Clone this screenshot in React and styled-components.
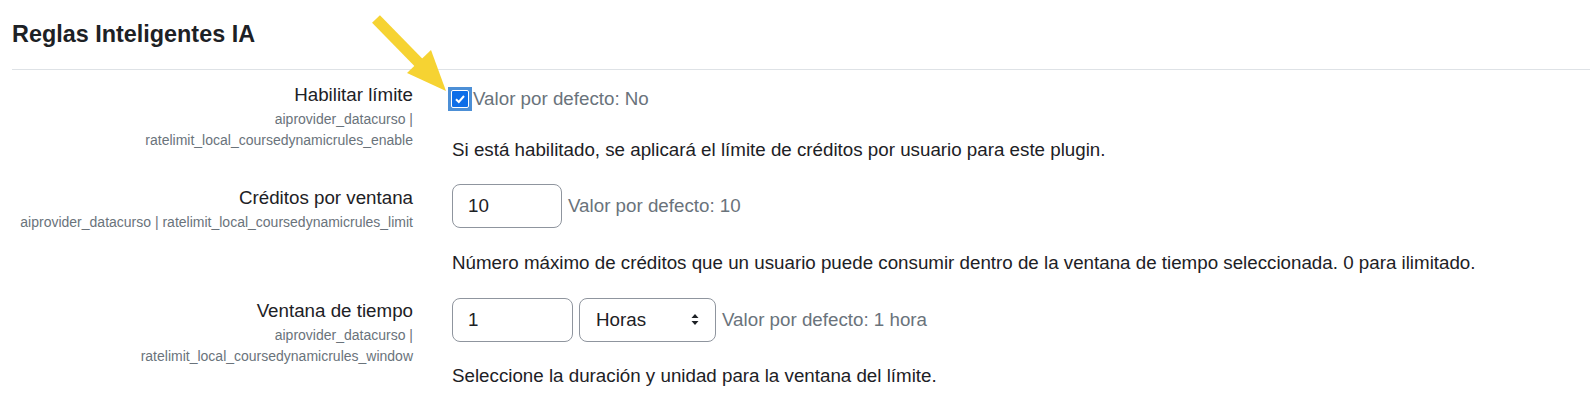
import React from "react"
import styled, { createGlobalStyle } from "styled-components"

const GlobalStyle = createGlobalStyle`
  body {
    margin: 0;
    background: #fff;
    color: #1d2125;
    font-family: "Liberation Sans", Arial, sans-serif;
  }
`

const Page = styled.div`
  position: relative;
  padding: 20px 0 0 12px;
  overflow: hidden;
`

const Heading = styled.h3`
  margin: 0;
  font-size: 23.4px;
  line-height: 28px;
  font-weight: 700;
`

const Divider = styled.hr`
  margin: 21px 0 11px;
  border: 0;
  border-top: 1px solid #dee2e6;
`

const SettingRow = styled.div`
  display: grid;
  grid-template-columns: 401px 1fr;
  column-gap: 39px;
  margin-bottom: 20px;
`

const LabelCol = styled.div`
  text-align: right;
`

const Label = styled.div`
  font-size: 18.75px;
  line-height: 28px;
`

const ShortName = styled.div`
  font-size: 14px;
  line-height: 21px;
  color: #6a737b;
`

const ContentCol = styled.div`
  display: flex;
  flex-direction: column;
`

const ControlRow = styled.div`
  display: flex;
  align-items: center;
  gap: 6px;
  height: ${(p) => p.$height}px;
`

const DefaultText = styled.span`
  font-size: 18.75px;
  line-height: 28px;
  color: #6a737b;
`

const Description = styled.div`
  margin-top: ${(p) => p.$gap}px;
  font-size: 18.75px;
  line-height: 28px;
`

const TextInput = styled.input`
  box-sizing: border-box;
  width: ${(p) => p.$width}px;
  height: 44px;
  padding: 0 15px;
  border: 1px solid #8f959e;
  border-radius: 8px;
  font-family: inherit;
  font-size: 18.75px;
  color: #1d2125;
  background: #fff;
  outline: none;
`

const SelectBox = styled.div`
  box-sizing: border-box;
  width: 137px;
  height: 44px;
  padding: 0 16px 0 16px;
  border: 1px solid #8f959e;
  border-radius: 8px;
  display: flex;
  align-items: center;
  justify-content: space-between;
  font-size: 18.75px;
  color: #1d2125;
`

const CheckRing = styled.span`
  box-sizing: border-box;
  width: 24px;
  height: 24px;
  margin-left: -4px;
  margin-right: -5px;
  margin-top: -1px;
  padding: 3px;
  background: #4c8fd6;
  display: flex;
`

const CheckBox = styled.span`
  box-sizing: border-box;
  width: 18px;
  height: 18px;
  border: 1px solid #fff;
  border-radius: 2px;
  background: #0d6ee8;
  display: flex;
  align-items: center;
  justify-content: center;
`

const Annotation = styled.svg`
  position: absolute;
  left: 0;
  top: 0;
  pointer-events: none;
`

const Checkbox = () => (
  <CheckRing>
    <CheckBox>
      <svg width="12" height="12" viewBox="0 0 12 12">
        <path d="M2 6.3 L4.8 9 L10 3" fill="none" stroke="#fff" strokeWidth="2" />
      </svg>
    </CheckBox>
  </CheckRing>
)

const SortArrows = () => (
  <svg width="8" height="13" viewBox="0 0 8 13">
    <path d="M4 1 L7.5 5 L0.5 5 Z" fill="#1d2125" />
    <path d="M4 12 L7.5 8 L0.5 8 Z" fill="#1d2125" />
  </svg>
)

const App = () => {
  return (
    <Page>
      <GlobalStyle />
      <Heading>Reglas Inteligentes IA</Heading>
      <Divider />

      <SettingRow>
        <LabelCol>
          <Label>Habilitar límite</Label>
          <ShortName>aiprovider_datacurso | ratelimit_local_coursedynamicrules_enable</ShortName>
        </LabelCol>
        <ContentCol>
          <ControlRow $height={36}>
            <Checkbox />
            <DefaultText>Valor por defecto: No</DefaultText>
          </ControlRow>
          <Description $gap={19}>
            Si está habilitado, se aplicará el límite de créditos por usuario para este plugin.
          </Description>
        </ContentCol>
      </SettingRow>

      <SettingRow>
        <LabelCol>
          <Label>Créditos por ventana</Label>
          <ShortName>aiprovider_datacurso | ratelimit_local_coursedynamicrules_limit</ShortName>
        </LabelCol>
        <ContentCol>
          <ControlRow $height={44}>
            <TextInput $width={110} defaultValue="10" />
            <DefaultText>Valor por defecto: 10</DefaultText>
          </ControlRow>
          <Description $gap={21}>
            Número máximo de créditos que un usuario puede consumir dentro de la ventana de tiempo
            seleccionada. 0 para ilimitado.
          </Description>
        </ContentCol>
      </SettingRow>

      <SettingRow>
        <LabelCol>
          <Label>Ventana de tiempo</Label>
          <ShortName>aiprovider_datacurso | ratelimit_local_coursedynamicrules_window</ShortName>
        </LabelCol>
        <ContentCol>
          <ControlRow $height={45}>
            <TextInput $width={121} defaultValue="1" />
            <SelectBox>
              <span>Horas</span>
              <SortArrows />
            </SelectBox>
            <DefaultText>Valor por defecto: 1 hora</DefaultText>
          </ControlRow>
          <Description $gap={20}>Seleccione la duración y unidad para la ventana del límite.</Description>
        </ContentCol>
      </SettingRow>

      <Annotation width="460" height="100" viewBox="0 0 460 100">
        <line x1="376" y1="19" x2="421" y2="65" stroke="#f6d332" strokeWidth="11" />
        <polygon points="446,91 407,73 431,50" fill="#f6d332" />
      </Annotation>
    </Page>
  )
}

export default App
